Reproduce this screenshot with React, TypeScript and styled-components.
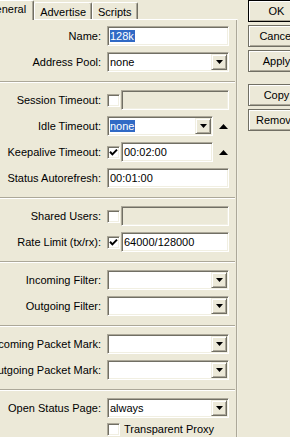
import styled, { createGlobalStyle } from 'styled-components'

const GlobalStyle = createGlobalStyle`
  html, body {
    margin: 0;
    padding: 0;
    background: #ece9d8;
    overflow: hidden;
  }
  body {
    font-family: "Liberation Sans", Arial, sans-serif;
    font-size: 11px;
    color: #000;
  }
`

const Window = styled.div`
  display: flex;
  width: 290px;
  height: 437px;
  overflow: hidden;
`

const Dialog = styled.div`
  width: 238px;
  flex-shrink: 0;
  display: flex;
  flex-direction: column;
`

const TabStrip = styled.div`
  display: flex;
  align-items: flex-end;
  height: 19px;
  margin-left: -21px;
  position: relative;
  z-index: 1;
`

const Tab = styled.div<{ $active?: boolean }>`
  box-sizing: border-box;
  height: ${p => (p.$active ? 20 : 17)}px;
  margin-bottom: ${p => (p.$active ? -1 : 0)}px;
  padding: ${p => (p.$active ? '1px 7px 0' : '2px 5px 0')};
  background: #ece9d8;
  border-top: 1px solid #fff;
  border-left: 1px solid #fff;
  border-right: 1px solid #716f64;
  box-shadow: inset -1px 0 0 #aca899;
  border-radius: 2px 2px 0 0;
  white-space: nowrap;
  line-height: 14px;
`

const Panel = styled.div`
  flex: 1;
  border-top: 1px solid #fff;
  border-right: 1px solid #f1efe2;
  box-shadow: inset -1px 0 0 #aca899;
  padding-top: 3px;
`

const Row = styled.div<{ $h?: number }>`
  display: grid;
  grid-template-columns: 101px auto;
  column-gap: 6px;
  height: ${p => p.$h ?? 26}px;
  align-items: center;
`

const Label = styled.div`
  display: flex;
  justify-content: flex-end;
  white-space: nowrap;
`

const Controls = styled.div`
  display: flex;
  align-items: center;
  gap: 1px;
`

const Separator = styled.div`
  height: 12px;
  box-sizing: border-box;
  padding-top: 6px;
  padding-right: 2px;

  &::after {
    content: '';
    display: block;
    border-top: 1px solid #aca899;
    border-bottom: 1px solid #fff;
  }
`

const Field = styled.div<{ $w: number; $disabled?: boolean }>`
  box-sizing: border-box;
  width: ${p => p.$w}px;
  height: 20px;
  display: flex;
  align-items: center;
  padding: 0 1px 0 2px;
  background: ${p => (p.$disabled ? '#ece9d8' : '#fff')};
  border: 1px solid;
  border-color: #aca899 #fff #fff #aca899;
  box-shadow: inset 1px 1px 0 #716f64, inset -1px -1px 0 #f1efe2;
`

const Value = styled.span`
  flex: 1;
  white-space: nowrap;
  overflow: hidden;
  line-height: 14px;
`

const Selected = styled.span`
  background: #316ac5;
  color: #fff;
  padding: 0 1px 0 0;
`

const DropButton = styled.div`
  box-sizing: border-box;
  width: 16px;
  height: 16px;
  display: flex;
  align-items: center;
  justify-content: center;
  background: #ece9d8;
  border: 1px solid;
  border-color: #f1efe2 #716f64 #716f64 #f1efe2;
  box-shadow: inset 1px 1px 0 #fff, inset -1px -1px 0 #aca899;
`

const CheckBox = styled.div`
  box-sizing: border-box;
  width: 13px;
  height: 13px;
  display: flex;
  align-items: center;
  justify-content: center;
  background: #fff;
  border: 1px solid;
  border-color: #aca899 #fff #fff #aca899;
  box-shadow: inset 1px 1px 0 #716f64, inset -1px -1px 0 #f1efe2;
`

const Arrow = styled.div`
  width: 18px;
  display: flex;
  justify-content: center;
`

const CheckLabel = styled.span`
  margin-left: 3px;
  white-space: nowrap;
`

const ButtonColumn = styled.div`
  display: flex;
  flex-direction: column;
  gap: 12px;
  padding-left: 10px;
`

const ButtonGroup = styled.div`
  display: flex;
  flex-direction: column;
  gap: 3px;
`

const ActionButton = styled.button<{ $default?: boolean }>`
  box-sizing: border-box;
  width: 57px;
  height: 22px;
  margin: 0;
  padding: 0;
  font: inherit;
  color: #000;
  background: #ece9d8;
  border: 1px solid ${p => (p.$default ? '#000' : '#716f64')};
  box-shadow: inset 1px 1px 0 #fff, inset -1px -1px 0 #aca899;
  white-space: nowrap;
  overflow: hidden;
`

const DownTriangle = () => (
  <svg width="7" height="4" viewBox="0 0 7 4">
    <path d="M0 0H7L3.5 4Z" fill="#000" />
  </svg>
)

const UpTriangle = () => (
  <svg width="9" height="5" viewBox="0 0 9 5">
    <path d="M0 5H9L4.5 0Z" fill="#000" />
  </svg>
)

function Check({ checked }: { checked?: boolean }) {
  return (
    <CheckBox>
      {checked && (
        <svg width="9" height="9" viewBox="0 0 9 9">
          <path d="M1 3.8L3.4 6.4L8 1.6" fill="none" stroke="#000" strokeWidth="2" />
        </svg>
      )}
    </CheckBox>
  )
}

function Select({ w, children }: { w: number; children?: React.ReactNode }) {
  return (
    <Field $w={w}>
      <Value>{children}</Value>
      <DropButton>
        <DownTriangle />
      </DropButton>
    </Field>
  )
}

export default function App() {
  return (
    <>
      <GlobalStyle />
      <Window>
        <Dialog>
          <TabStrip>
            <Tab $active>General</Tab>
            <Tab>Advertise</Tab>
            <Tab>Scripts</Tab>
          </TabStrip>
          <Panel>
            <Row>
              <Label>Name:</Label>
              <Field $w={122}>
                <Value>
                  <Selected>128k</Selected>
                </Value>
              </Field>
            </Row>
            <Row>
              <Label>Address Pool:</Label>
              <Select w={122}>none</Select>
            </Row>
            <Separator />
            <Row>
              <Label>Session Timeout:</Label>
              <Controls>
                <Check />
                <Field $w={108} $disabled />
              </Controls>
            </Row>
            <Row>
              <Label>Idle Timeout:</Label>
              <Controls>
                <Select w={106}>
                  <Selected>none</Selected>
                </Select>
                <Arrow>
                  <UpTriangle />
                </Arrow>
              </Controls>
            </Row>
            <Row>
              <Label>Keepalive Timeout:</Label>
              <Controls>
                <Check checked />
                <Field $w={92}>
                  <Value>00:02:00</Value>
                </Field>
                <Arrow>
                  <UpTriangle />
                </Arrow>
              </Controls>
            </Row>
            <Row>
              <Label>Status Autorefresh:</Label>
              <Field $w={122}>
                <Value>00:01:00</Value>
              </Field>
            </Row>
            <Separator />
            <Row>
              <Label>Shared Users:</Label>
              <Controls>
                <Check />
                <Field $w={108} $disabled />
              </Controls>
            </Row>
            <Row>
              <Label>Rate Limit (tx/rx):</Label>
              <Controls>
                <Check checked />
                <Field $w={108}>
                  <Value>64000/128000</Value>
                </Field>
              </Controls>
            </Row>
            <Separator />
            <Row>
              <Label>Incoming Filter:</Label>
              <Select w={122} />
            </Row>
            <Row>
              <Label>Outgoing Filter:</Label>
              <Select w={122} />
            </Row>
            <Separator />
            <Row>
              <Label>Incoming Packet Mark:</Label>
              <Select w={122} />
            </Row>
            <Row>
              <Label>Outgoing Packet Mark:</Label>
              <Select w={122} />
            </Row>
            <Separator />
            <Row>
              <Label>Open Status Page:</Label>
              <Select w={122}>always</Select>
            </Row>
            <Row $h={16}>
              <span />
              <Controls>
                <Check />
                <CheckLabel>Transparent Proxy</CheckLabel>
              </Controls>
            </Row>
          </Panel>
        </Dialog>
        <ButtonColumn>
          <ButtonGroup>
            <ActionButton $default>OK</ActionButton>
            <ActionButton>Cancel</ActionButton>
            <ActionButton>Apply</ActionButton>
          </ButtonGroup>
          <ButtonGroup>
            <ActionButton>Copy</ActionButton>
            <ActionButton>Remove</ActionButton>
          </ButtonGroup>
        </ButtonColumn>
      </Window>
    </>
  )
}
